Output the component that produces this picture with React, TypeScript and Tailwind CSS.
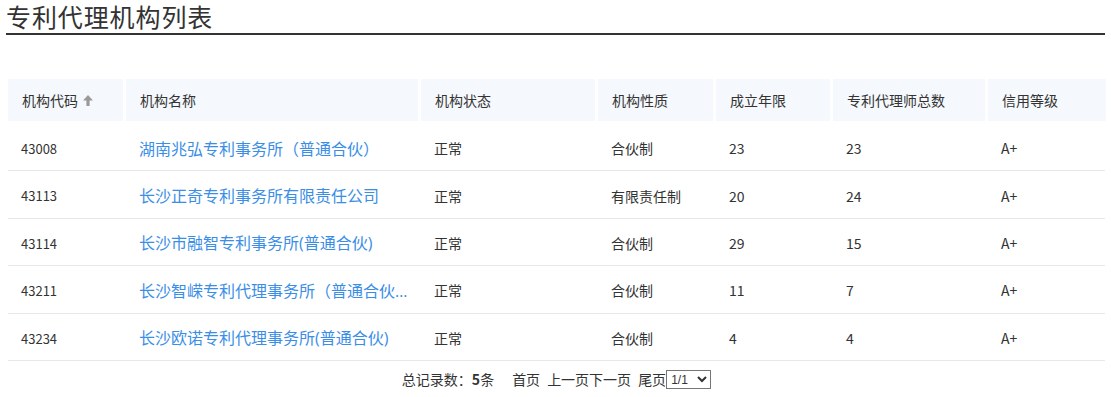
const agencies = [
  { code: "43008", name: "湖南兆弘专利事务所（普通合伙）", status: "正常", kind: "合伙制", years: "23", agents: "23", credit: "A+" },
  { code: "43113", name: "长沙正奇专利事务所有限责任公司", status: "正常", kind: "有限责任制", years: "20", agents: "24", credit: "A+" },
  { code: "43114", name: "长沙市融智专利事务所(普通合伙)", status: "正常", kind: "合伙制", years: "29", agents: "15", credit: "A+" },
  { code: "43211", name: "长沙智嵘专利代理事务所（普通合伙）", status: "正常", kind: "合伙制", years: "11", agents: "7", credit: "A+" },
  { code: "43234", name: "长沙欧诺专利代理事务所(普通合伙)", status: "正常", kind: "合伙制", years: "4", agents: "4", credit: "A+" },
];

const cols = "grid grid-cols-[115px_292px_174px_115px_114px_152px_118px] gap-x-[3px]";

const headers = ["机构名称", "机构状态", "机构性质", "成立年限", "专利代理师总数", "信用等级"];

const SortUp = () => (
  <svg width="10" height="11" viewBox="0 0 10 11" className="ml-[5px] mt-[1px]">
    <path d="M5 0 L10 5.5 H6.6 V11 H3.4 V5.5 H0 Z" fill="#9a9a9a" />
  </svg>
);

export default function App() {
  return (
    <div className="bg-white w-[1111px] h-[397px] font-['Noto_Sans_CJK_SC','Microsoft_YaHei',sans-serif] text-[#333]">
      {/* title */}
      <div className="px-[6px]">
        <h1 className="text-[25px] leading-[33px] text-[#333] border-b-2 border-[#333] tracking-[0.9px]">
          专利代理机构列表
        </h1>
      </div>

      <div className="pl-[8px] pr-[6px] mt-[44px]">
        {/* header */}
        <div className={`${cols} h-[42px] text-[14px]`}>
          <div className="bg-[#f5f8fc] flex items-center pl-[14px]">
            机构代码
            <SortUp />
          </div>
          {headers.map((h, i) => (
            <div key={i} className="bg-[#f5f8fc] flex items-center pl-[14px]">
              {h}
            </div>
          ))}
        </div>

        {/* rows */}
        <div className="mt-[3px]">
          {agencies.map((a) => (
            <div
              key={a.code}
              className={`${cols} h-[47.4px] pt-[3px] items-center border-b border-[#e6e8eb] text-[14px]`}
            >
              <div className="pl-[13px] text-[13px]">{a.code}</div>
              <div className="pl-[13px] pr-[9px] text-[16px] text-[#3a8ee6] truncate font-['Open_Sans','Noto_Sans_CJK_SC',sans-serif]">
                {a.name}
              </div>
              <div className="pl-[13px]">{a.status}</div>
              <div className="pl-[13px]">{a.kind}</div>
              <div className="pl-[13px]">{a.years}</div>
              <div className="pl-[13px]">{a.agents}</div>
              <div className="pl-[13px]">{a.credit}</div>
            </div>
          ))}
        </div>

        {/* pagination */}
        <div className="flex items-center justify-center h-[36px] pt-[2px] text-[14px]">
          <span>
            总记录数：<b>5</b>条
          </span>
          <span className="ml-[18px]">首页</span>
          <span className="ml-[7px]">上一页下一页</span>
          <span className="ml-[7px]">尾页</span>
          <select className="h-[19px] w-[45px] border border-[#767676] text-[12px] leading-none bg-white font-['Liberation_Sans',sans-serif]">
            <option>1/1</option>
          </select>
        </div>
      </div>
    </div>
  );
}
